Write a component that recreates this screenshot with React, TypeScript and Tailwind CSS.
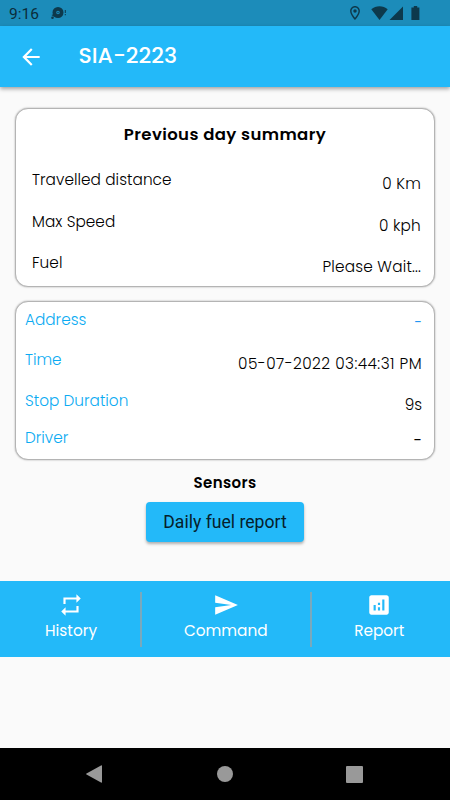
import React from "react";

const summary = [
  { label: "Travelled distance", value: "0 Km" },
  { label: "Max Speed", value: "0 kph" },
  { label: "Fuel", value: "Please Wait..." },
];

const details = [
  { label: "Address", value: "-", row: "h-10", valueClass: "text-[#2196f3] pt-0.5 text-sm font-normal" },
  { label: "Time", value: "05-07-2022 03:44:31 PM", row: "h-[41px]", valueClass: "pt-1 tracking-[0.45px]" },
  { label: "Stop Duration", value: "9s", row: "h-[37px]", valueClass: "pt-1" },
  { label: "Driver", value: "-", row: "h-6", valueClass: "pt-[3px] font-normal" },
];

const StatusBar = () => {
  return (
    <div className="flex h-[26px] items-center bg-[#1c8cba] text-[#0d394c]">
      <span className="ml-[9px] w-[42px] pt-0.5 font-['Roboto',sans-serif] text-[15.5px] leading-6 font-normal text-[#0b2c3b]">
        9:16
      </span>
      <svg width="16" height="14" viewBox="0 0 16 14" fill="currentColor">
        <path
          fillRule="evenodd"
          d="M7 1a5.5 5.5 0 1 1 0 11a5.5 5.5 0 0 1 0-11zM7 4.7a1.8 1.8 0 1 0 0 3.6a1.8 1.8 0 0 0 0-3.6z"
        />
        <circle cx="7" cy="6.5" r="0.7" />
        <circle cx="1.5" cy="11.7" r="1.3" />
        <path d="M0.5 9L3 8L5 11L2.5 10.5zM13.8 4h1v3h-1zM13.8 8h1v1.3h-1z" />
      </svg>
      <svg className="ml-[283px]" width="10" height="14" viewBox="5 2 14 20" fill="currentColor">
        <path d="M12 2C8.13 2 5 5.13 5 9c0 5.25 7 13 7 13s7-7.75 7-13c0-3.87-3.13-7-7-7zM7 9c0-2.76 2.24-5 5-5s5 2.24 5 5c0 2.88-2.88 7.19-5 9.88C9.92 16.21 7 11.85 7 9z" />
        <circle cx="12" cy="9" r="2.5" />
      </svg>
      <svg className="ml-[11px]" width="17" height="14" viewBox="0 0 17 14" fill="currentColor">
        <path d="M8.5 14L0.3 3.3C2.6 1.2 5.4 0.2 8.5 0.2s5.9 1 8.2 3.1z" />
      </svg>
      <svg className="ml-[1px]" width="14" height="14" viewBox="0 0 14 14" fill="currentColor">
        <path d="M0.5 14L14 0.5V14z" />
      </svg>
      <svg className="ml-2" width="9" height="14" viewBox="0 0 9 14" fill="currentColor">
        <path d="M2.8 0h3.4v1.5H8.4V14H0.4V1.5h2.4z" />
      </svg>
    </div>
  );
};

const Header = () => {
  return (
    <header className="relative flex h-[61px] items-center bg-[#23b9f9] text-white shadow-[0_2px_4px_rgba(0,0,0,0.35)]">
      <svg className="ml-[18px]" width="26" height="26" viewBox="0 0 24 24" fill="currentColor">
        <path d="M20 11H7.83l5.59-5.59L12 4l-8 8 8 8 1.41-1.41L7.83 13H20v-2z" />
      </svg>
      <h1 className="mb-px ml-[34.5px] text-[22px] leading-7 font-medium">SIA-2223</h1>
    </header>
  );
};

const card =
  "rounded-[13px] border border-[#b4b4b4] bg-white shadow-[0_0_2px_rgba(0,0,0,0.35)]";

const Summary = () => {
  return (
    <section className={`${card} mx-[15px] mt-[21px] h-[179px]`}>
      <h2 className="pt-4 text-center text-[16.5px] leading-5 font-semibold tracking-[0.4px]">
        Previous day summary
      </h2>
      <div className="mt-[25px] pr-[13px] pl-4">
        {summary.map((item) => (
          <div key={item.label} className="flex h-[41.5px] justify-between">
            <span className="tracking-[0.05px]">{item.label}</span>
            <span className="pt-1 tracking-[0.2px]">{item.value}</span>
          </div>
        ))}
      </div>
    </section>
  );
};

const Details = () => {
  return (
    <section className={`${card} mx-[15px] mt-3.5 h-[159px] pt-2 pr-3 pl-[9px]`}>
      {details.map((item) => (
        <div key={item.label} className={`flex justify-between ${item.row}`}>
          <span className="text-[#0babf2]">{item.label}</span>
          <span className={item.valueClass}>{item.value}</span>
        </div>
      ))}
    </section>
  );
};

const BottomMenu = () => {
  return (
    <nav className="mt-[39px] flex h-[76px] items-center bg-[#23b9f9] text-[15.3px] font-normal text-white">
      <button className="flex w-[140px] flex-col items-center pb-1 pl-0.5">
        <svg width="26" height="26" viewBox="0 0 24 24" fill="currentColor">
          <path d="M7 7h10v3l4-4-4-4v3H5v6h2V7zm10 10H7v-3l-4 4 4 4v-3h12v-6h-2v4z" />
        </svg>
        <span className="mt-px leading-6">History</span>
      </button>
      <div className="h-[55px] w-[1.5px] bg-[#79a9bd]" />
      <button className="flex w-[168.5px] flex-col items-center pb-1">
        <svg width="26" height="26" viewBox="0 0 24 24" fill="currentColor">
          <path d="M2.01 21L23 12 2.01 3 2 10l15 2-15 2z" />
        </svg>
        <span className="mt-px leading-6">Command</span>
      </button>
      <div className="h-[55px] w-[1.5px] bg-[#79a9bd]" />
      <button className="flex flex-1 flex-col items-center pr-[3px] pb-1">
        <svg width="26" height="26" viewBox="0 0 24 24" fill="currentColor">
          <path d="M19 3H5c-1.1 0-2 .9-2 2v14c0 1.1.9 2 2 2h14c1.1 0 2-.9 2-2V5c0-1.1-.9-2-2-2zM9 17H7v-5h2v5zm4 0h-2v-3h2v3zm0-5h-2v-2h2v2zm4 5h-2V7h2v10z" />
        </svg>
        <span className="mt-px leading-6">Report</span>
      </button>
    </nav>
  );
};

const SystemNav = () => {
  return (
    <div className="mt-auto flex h-[52px] items-center bg-black text-[#999]">
      <svg className="ml-[85px]" width="18" height="20" viewBox="0 0 18 20" fill="currentColor">
        <path d="M16 1.5Q17 1 17 2v16q0 1-1 0.5L1.5 10.5Q0.5 10 1.5 9.5z" />
      </svg>
      <div className="ml-[114px] size-4 rounded-full bg-[#999]" />
      <div className="ml-[113px] size-[17px] rounded-[1px] bg-[#999]" />
    </div>
  );
};

export default function App() {
  return (
    <div className="flex h-[800px] w-[450px] flex-col overflow-hidden bg-[#fafafa] font-['Poppins','Inter',sans-serif] text-[15.3px] leading-5 font-light text-black">
      <StatusBar />
      <Header />
      <Summary />
      <Details />
      <h2 className="mt-[13px] text-center text-[15px] leading-5 font-semibold tracking-[0.4px]">Sensors</h2>
      <button className="mx-auto mt-[9px] h-[40px] w-[158px] rounded bg-[#23b9f9] font-['Roboto',sans-serif] text-[17.6px] font-normal text-[#06202b] shadow-[0_2px_3px_rgba(0,0,0,0.3)]">
        Daily fuel report
      </button>
      <BottomMenu />
      <SystemNav />
    </div>
  );
}
